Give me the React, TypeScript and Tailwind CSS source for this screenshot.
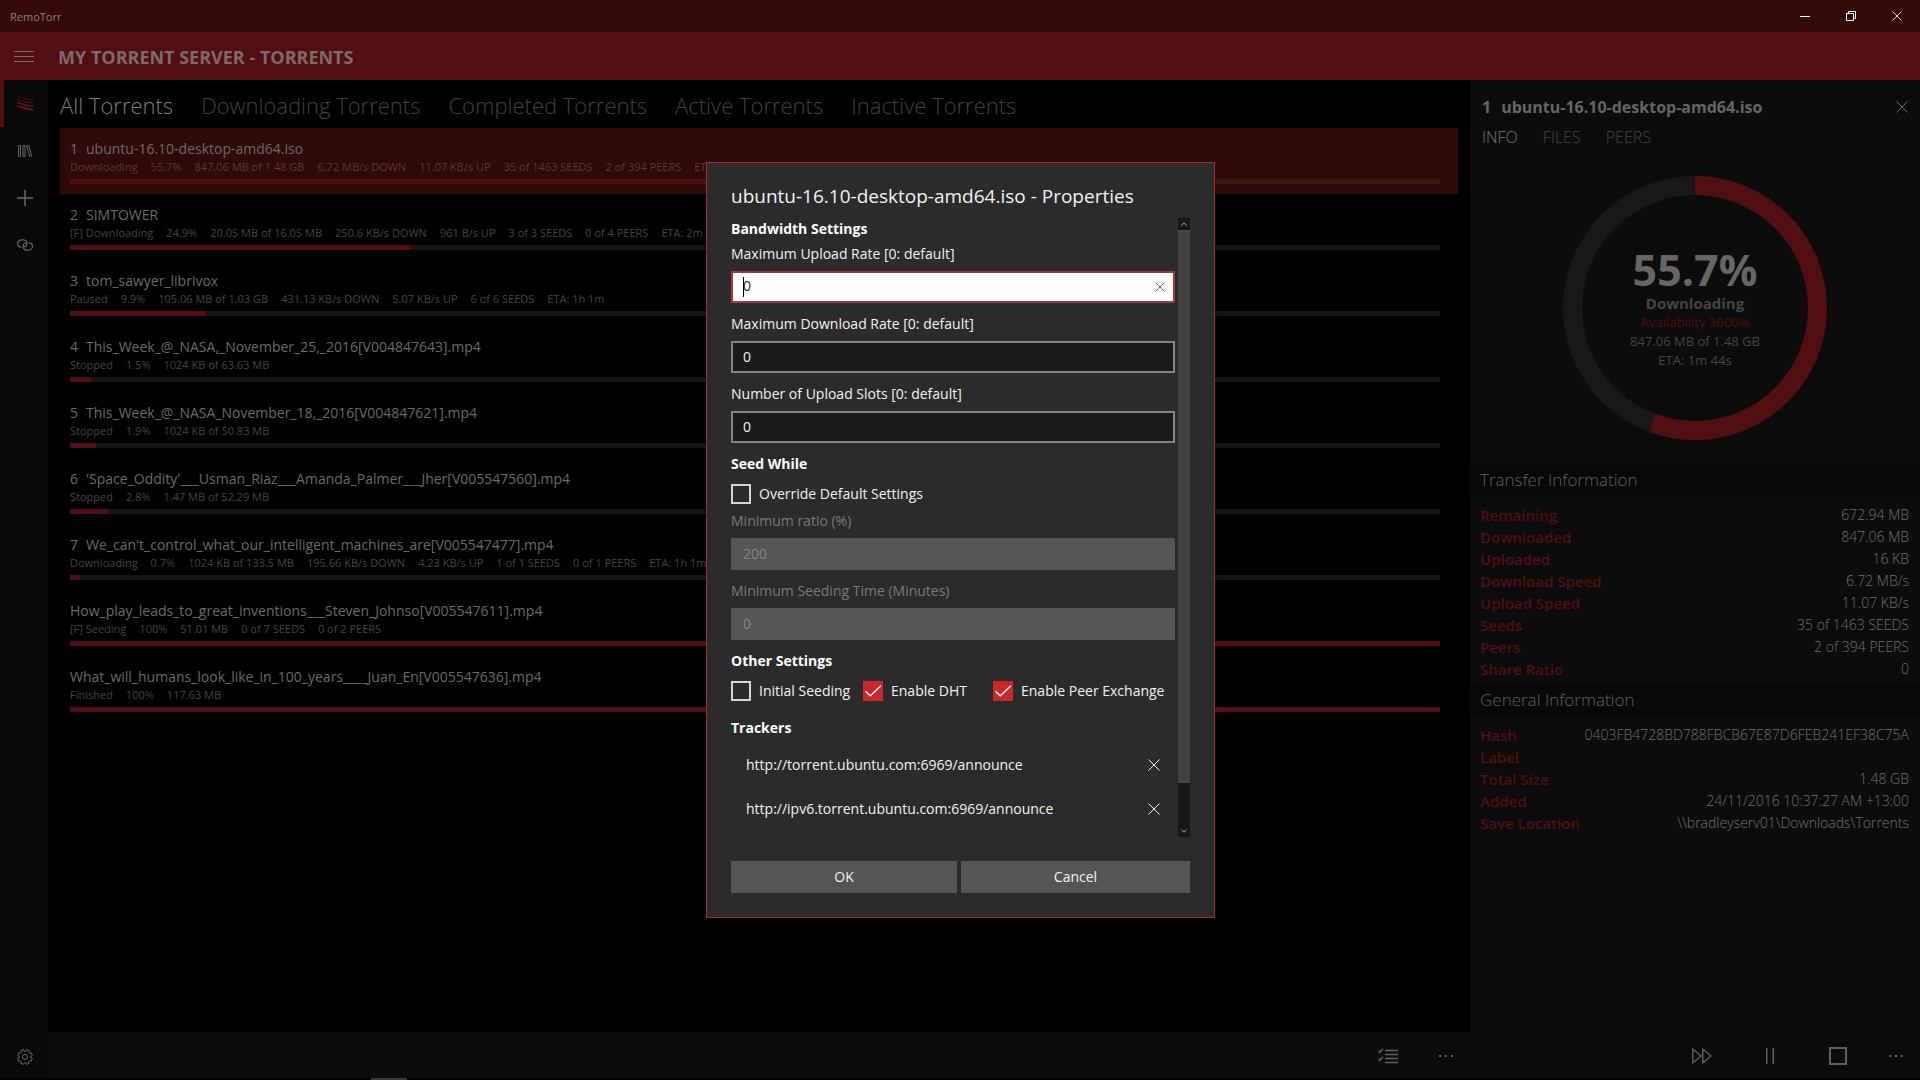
import type { ReactNode } from "react";

/* ---------- Data ---------- */
const tabs = [
  "All Torrents",
  "Downloading Torrents",
  "Completed Torrents",
  "Active Torrents",
  "Inactive Torrents",
];

const torrents = [
  {
    queue: "1",
    name: "ubuntu-16.10-desktop-amd64.iso",
    progress: 55.7,
    details: ["Downloading", "55.7%", "847.06 MB of 1.48 GB", "6.72 MB/s DOWN", "11.07 KB/s UP", "35 of 1463 SEEDS", "2 of 394 PEERS", "ETA: 1m 44s"],
  },
  {
    queue: "2",
    name: "SIMTOWER",
    progress: 24.9,
    details: ["[F] Downloading", "24.9%", "20.05 MB of 16.05 MB", "250.6 KB/s DOWN", "961 B/s UP", "3 of 3 SEEDS", "0 of 4 PEERS", "ETA: 2m"],
  },
  {
    queue: "3",
    name: "tom_sawyer_librivox",
    progress: 9.9,
    details: ["Paused", "9.9%", "105.06 MB of 1.03 GB", "431.13 KB/s DOWN", "5.07 KB/s UP", "6 of 6 SEEDS", "ETA: 1h 1m"],
  },
  {
    queue: "4",
    name: "This_Week_@_NASA,_November_25,_2016[V004847643].mp4",
    progress: 1.5,
    details: ["Stopped", "1.5%", "1024 KB of 63.63 MB"],
  },
  {
    queue: "5",
    name: "This_Week_@_NASA_November_18,_2016[V004847621].mp4",
    progress: 1.9,
    details: ["Stopped", "1.9%", "1024 KB of 50.83 MB"],
  },
  {
    queue: "6",
    name: "'Space_Oddity'___Usman_Riaz___Amanda_Palmer___Jher[V005547560].mp4",
    progress: 2.8,
    details: ["Stopped", "2.8%", "1.47 MB of 52.29 MB"],
  },
  {
    queue: "7",
    name: "We_can't_control_what_our_intelligent_machines_are[V005547477].mp4",
    progress: 0.7,
    details: ["Downloading", "0.7%", "1024 KB of 133.5 MB", "195.66 KB/s DOWN", "4.23 KB/s UP", "1 of 1 SEEDS", "0 of 1 PEERS", "ETA: 1h 1m"],
  },
  {
    queue: "",
    name: "How_play_leads_to_great_inventions___Steven_Johnso[V005547611].mp4",
    progress: 100,
    details: ["[F] Seeding", "100%", "51.01 MB", "0 of 7 SEEDS", "0 of 2 PEERS"],
  },
  {
    queue: "",
    name: "What_will_humans_look_like_in_100_years____Juan_En[V005547636].mp4",
    progress: 100,
    details: ["Finished", "100%", "117.63 MB"],
  },
];

const transferInfo = [
  ["Remaining", "672.94 MB"],
  ["Downloaded", "847.06 MB"],
  ["Uploaded", "16 KB"],
  ["Download Speed", "6.72 MB/s"],
  ["Upload Speed", "11.07 KB/s"],
  ["Seeds", "35 of 1463 SEEDS"],
  ["Peers", "2 of 394 PEERS"],
  ["Share Ratio", "0"],
];

const generalInfo = [
  ["Hash", "0403FB4728BD788FBCB67E87D6FEB241EF38C75A"],
  ["Label", ""],
  ["Total Size", "1.48 GB"],
  ["Added", "24/11/2016 10:37:27 AM +13:00"],
  ["Save Location", "\\\\bradleyserv01\\Downloads\\Torrents"],
];

const trackers = [
  "http://torrent.ubuntu.com:6969/announce",
  "http://ipv6.torrent.ubuntu.com:6969/announce",
];

/* ---------- Icons ---------- */
function CrossIcon({ className }: { className: string }) {
  return (
    <svg viewBox="0 0 12 12" className={className} fill="none" stroke="currentColor" aria-hidden="true">
      <path d="M.5.5l11 11M11.5.5l-11 11" />
    </svg>
  );
}

function MoreIcon() {
  return (
    <svg viewBox="0 0 14 2" className="h-0.5 w-3.5" fill="currentColor" aria-hidden="true">
      <path d="M0 0h2v2H0zM6 0h2v2H6zM12 0h2v2h-2z" />
    </svg>
  );
}

function StripesIcon() {
  return (
    <svg viewBox="0 0 16 15" className="h-[15px] w-4" fill="none" stroke="currentColor" aria-hidden="true">
      <path strokeWidth="0.7" d="M0 .8c4 0 8 2.800 16 2.800" />
      <path strokeWidth="1" d="M0 3.800c4 0 8 3 16 3" />
      <path strokeWidth="1.400" d="M0 6.900c4 0 8 3.200 16 3.200" />
      <path strokeWidth="1.800" d="M0 10.200c4 0 8 3.400 16 3.400" />
    </svg>
  );
}

function LibraryIcon() {
  return (
    <svg viewBox="0 0 16 14" className="h-3.5 w-4" fill="none" stroke="currentColor" aria-hidden="true">
      <path d="M1.500 1.500h2v11h-2zM6 1.500h2v11H6zM9.700 1.900l2-.5 3 10.600-2 .6z" />
    </svg>
  );
}

function LinkIcon() {
  return (
    <svg viewBox="0 0 16 12" className="h-3 w-4" fill="none" stroke="currentColor" strokeWidth="1.200" aria-hidden="true">
      <path d="M4.500 8.200C1.500 8.200.6 6 .6 4.600.6 2.600 2.500.8 5 .8h1.500c2.500 0 3.500 2.200 3.300 4.200C9.600 6.500 8.500 8 7 8" />
      <path d="M11.500 3.800c3 0 3.900 2.200 3.900 3.600 0 2-1.900 3.800-4.400 3.800H9.500C7 11.200 6 9 6.200 7 6.400 5.500 7.500 4 9 4" />
    </svg>
  );
}

const gearPoints = Array.from({ length: 8 }, (_, i) => i * 45)
  .flatMap((angle) => [
    [angle - 17, 5.7],
    [angle - 12, 7.5],
    [angle + 12, 7.5],
    [angle + 17, 5.7],
  ])
  .map(([angle, radius]) => {
    const rad = ((angle + 22.5) * Math.PI) / 180;
    return `${(8 + radius * Math.cos(rad)).toFixed(2)},${(8 + radius * Math.sin(rad)).toFixed(2)}`;
  })
  .join(" ");

function GearIcon() {
  return (
    <svg viewBox="0 0 16 16" className="size-4" fill="none" stroke="currentColor" strokeLinejoin="round" aria-hidden="true">
      <polygon points={gearPoints} />
      <circle cx="8" cy="8" r="2.600" />
    </svg>
  );
}

/* ---------- Small parts ---------- */
function NavButton({ label, active, children }: { label: string; active?: boolean; children: ReactNode }) {
  return (
    <button
      aria-label={label}
      className={
        active
          ? "flex h-[47px] w-12 items-center justify-center border-l-4 border-[#510f11] pr-0.5 text-[#6b1416]"
          : "flex h-[47px] w-12 items-center justify-center pl-0.5 text-[#666]"
      }
    >
      {children}
    </button>
  );
}

function Field({ id, label, value, disabled }: { id: string; label: string; value: string; disabled?: boolean }) {
  return (
    <div className="mb-[11px]">
      <label htmlFor={id} className={disabled ? "block text-[#7a7a7a]" : "block text-[#f2f2f2]"}>
        {label}
      </label>
      <input
        id={id}
        type="text"
        defaultValue={value}
        disabled={disabled}
        className={
          disabled
            ? "mt-[7px] block h-8 w-full border-2 border-[#555] bg-[#555] px-2.5 pb-0.5 text-[#868686]"
            : "mt-[7px] block h-8 w-full border-2 border-[#868686] bg-[#1a1a1a] px-2.5 pb-0.5 text-[#f2f2f2] outline-none"
        }
      />
    </div>
  );
}

function CheckBox({ id, label, checked }: { id: string; label: string; checked?: boolean }) {
  return (
    <div className="flex h-5 items-center">
      <span className="relative flex size-5">
        <input
          id={id}
          type="checkbox"
          defaultChecked={checked}
          className="peer size-5 appearance-none border-2 border-[#d5d5d5] checked:border-[#c9282b] checked:bg-[#c9282b]"
        />
        <svg
          viewBox="0 0 20 20"
          className="pointer-events-none absolute inset-0 hidden size-5 peer-checked:block"
          fill="none"
          stroke="#fff"
          strokeWidth="1.200"
          aria-hidden="true"
        >
          <path d="M2.500 10.200l4.800 4.600L17.800 4.800" />
        </svg>
      </span>
      <label htmlFor={id} className="pl-2 whitespace-nowrap">
        {label}
      </label>
    </div>
  );
}

function InfoSection({ title, rows }: { title: string; rows: string[][] }) {
  return (
    <section>
      <h3 className="flex h-[34px] items-center bg-[#080808] px-2.5 text-[17px] font-light text-[#606060]">{title}</h3>
      <table className="mt-[7px] mb-[3px] w-full">
        <tbody>
          {rows.map(([label, value]) => (
            <tr key={label} className="h-[22px]">
              <th scope="row" className="pl-2.5 text-left text-[15px] font-semibold text-[#510f11]">
                {label}
              </th>
              <td className="pr-[11px] text-right font-light text-[#707070]">{value}</td>
            </tr>
          ))}
        </tbody>
      </table>
    </section>
  );
}

/* ---------- Torrent list ---------- */
function TorrentList() {
  return (
    <main className="flex min-w-0 flex-1 flex-col pr-3 pl-3">
      <nav className="flex h-12 items-center gap-7 pt-0.5 text-[22px] font-light whitespace-nowrap">
        {tabs.map((tab, i) => (
          <button key={tab} className={i === 0 ? "text-[#7d7d7d]" : "text-[#404040]"}>
            {tab}
          </button>
        ))}
      </nav>
      <ul>
        {torrents.map((torrent, i) => (
          <li
            key={torrent.name}
            className={
              i === 0
                ? "bg-[#300909] pt-[11px] pr-[18px] pb-2.5 pl-2.5 text-[#553a3a]"
                : "pt-[11px] pr-[18px] pb-2.5 pl-2.5 text-[#444]"
            }
          >
            <div className="flex gap-2 text-sm leading-5 text-[#6a6a6a]">
              {torrent.queue && <span>{torrent.queue}</span>}
              <span>{torrent.name}</span>
            </div>
            <div className="flex gap-[13px] text-[11px] leading-4 whitespace-nowrap">
              {torrent.details.map((detail) => (
                <span key={detail}>{detail}</span>
              ))}
            </div>
            <div className={i === 0 ? "mt-1 h-[5px] bg-[#3a1517]" : "mt-1 h-[5px] bg-[#151515]"}>
              <div className="h-full bg-[#510f11]" style={{ width: `${torrent.progress}%` }} />
            </div>
          </li>
        ))}
      </ul>
    </main>
  );
}

/* ---------- Details pane ---------- */
function DetailsPane() {
  return (
    <aside className="flex w-[450px] shrink-0 flex-col bg-[#0c0c0c] text-sm leading-5">
      <div className="flex items-center justify-between pt-[15px] pr-3 pl-3 text-base leading-6 font-bold text-[#666]">
        <h2 className="flex gap-2.5">
          <span>1</span>
          <span>ubuntu-16.10-desktop-amd64.iso</span>
        </h2>
        <button aria-label="Close details">
          <CrossIcon className="size-3" />
        </button>
      </div>
      <nav className="flex gap-[25px] px-3 pt-2 text-base leading-5 font-light text-[#444]">
        <button className="text-[#777]">INFO</button>
        <button>FILES</button>
        <button>PEERS</button>
      </nav>

      {/* Progress ring */}
      <div className="mt-[29px] mb-[23px] grid place-items-center">
        <svg viewBox="0 0 264 264" className="col-start-1 row-start-1 size-66" fill="none" strokeWidth="19" aria-hidden="true">
          <circle cx="132" cy="132" r="122.500" stroke="#181818" />
          <circle cx="132" cy="132" r="122.500" stroke="#510f11" pathLength="100" strokeDasharray="55.700 100" transform="rotate(-90 132 132)" />
        </svg>
        <div className="col-start-1 row-start-1 flex flex-col items-center text-[13px] leading-[19px] text-[#444]">
          <span className="text-[43px] leading-[46px] font-bold text-[#666]">55.7%</span>
          <span className="text-[15px] leading-5 font-bold">Downloading</span>
          <span className="text-[#510f11]">Availability 3600%</span>
          <span>847.06 MB of 1.48 GB</span>
          <span>ETA: 1m 44s</span>
        </div>
      </div>

      <InfoSection title="Transfer Information" rows={transferInfo} />
      <InfoSection title="General Information" rows={generalInfo} />

      <div className="mt-auto flex h-[46px] items-center justify-end pt-0.5 text-[#606060]">
        <button aria-label="Force start" className="flex h-full w-[68px] items-center justify-center">
          <svg viewBox="0 0 20 16" className="h-4 w-5" fill="none" stroke="currentColor" strokeWidth="1.400" aria-hidden="true">
            <path d="M.8 1.200v13.600L9 8zM10.800 1.200v13.600L19 8z" />
          </svg>
        </button>
        <button aria-label="Pause" className="flex h-full w-[68px] items-center justify-center">
          <svg viewBox="0 0 8 16" className="h-4 w-2" fill="currentColor" aria-hidden="true">
            <path d="M0 0h1.500v16H0zM6.500 0H8v16H6.500z" />
          </svg>
        </button>
        <button aria-label="Stop" className="flex h-full w-[68px] items-center justify-center">
          <span className="size-[18px] border-2 border-current" />
        </button>
        <button aria-label="More actions" className="flex h-full w-12 items-center justify-center">
          <MoreIcon />
        </button>
      </div>
    </aside>
  );
}

/* ---------- Properties dialog ---------- */
function PropertiesDialog() {
  return (
    <div className="fixed inset-0 flex items-center justify-center pl-px">
      <div
        role="dialog"
        aria-labelledby="dialog-title"
        className="w-[509px] border border-[#a52c2e] bg-[#2b2b2b] px-6 pt-[19px] pb-6 text-sm leading-5 text-[#f2f2f2]"
      >
        <h1 id="dialog-title" className="text-[19px] leading-7">
          ubuntu-16.10-desktop-amd64.iso - Properties
        </h1>

        <div className="mt-2 flex h-[619px] gap-[3px]">
          <div className="flex-1 pt-px">
            <h2 className="mb-[5px] font-bold text-white">Bandwidth Settings</h2>
            <div className="mb-[11px]">
              <label htmlFor="max-upload" className="block">
                Maximum Upload Rate [0: default]
              </label>
              <div className="relative mt-[7px] flex h-8 items-center border-2 border-[#a4373a] bg-white text-[#222]">
                <input id="max-upload" type="text" defaultValue="0" className="min-w-0 flex-1 pb-0.5 pl-2.5 outline-none" />
                <span className="absolute left-2.5 h-5 w-px bg-black" />
                <button aria-label="Clear" className="px-2 text-[#444]">
                  <CrossIcon className="size-2.5" />
                </button>
              </div>
            </div>
            <Field id="max-download" label="Maximum Download Rate [0: default]" value="0" />
            <Field id="upload-slots" label="Number of Upload Slots [0: default]" value="0" />

            <h2 className="mb-2.5 font-bold text-white">Seed While</h2>
            <div className="mb-[7px]">
              <CheckBox id="override" label="Override Default Settings" />
            </div>
            <Field id="min-ratio" label="Minimum ratio (%)" value="200" disabled />
            <Field id="min-time" label="Minimum Seeding Time (Minutes)" value="0" disabled />

            <h2 className="mb-2.5 font-bold text-white">Other Settings</h2>
            <div className="grid grid-cols-[132px_130px_1fr]">
              <CheckBox id="initial-seeding" label="Initial Seeding" />
              <CheckBox id="enable-dht" label="Enable DHT" checked />
              <CheckBox id="enable-pex" label="Enable Peer Exchange" checked />
            </div>

            <h2 className="mt-[17px] mb-[5px] font-bold text-white">Trackers</h2>
            <ul>
              {trackers.map((tracker) => (
                <li key={tracker} className="flex h-11 items-center justify-between pr-[15px] pl-[15px]">
                  <span>{tracker}</span>
                  <button aria-label={`Remove ${tracker}`}>
                    <CrossIcon className="size-3" />
                  </button>
                </li>
              ))}
            </ul>
          </div>

          {/* Scrollbar */}
          <div className="flex w-3 flex-col bg-[#171717] text-[#b0b0b0]">
            <span className="flex h-3 items-center justify-center">
              <svg viewBox="0 0 6 4" className="h-1 w-1.5" fill="none" stroke="currentColor" aria-hidden="true">
                <path d="M.4 3.500L3 .8l2.600 2.700" />
              </svg>
            </span>
            <span className="h-[553px] bg-[#444]" />
            <span className="mt-auto flex h-3 items-center justify-center">
              <svg viewBox="0 0 6 4" className="h-1 w-1.5" fill="none" stroke="currentColor" aria-hidden="true">
                <path d="M.4.5L3 3.200 5.600.5" />
              </svg>
            </span>
          </div>
        </div>

        <div className="mt-6 grid grid-cols-[226px_1fr] gap-1">
          <button className="h-8 bg-[#555]">OK</button>
          <button className="h-8 bg-[#555]">Cancel</button>
        </div>
      </div>
    </div>
  );
}

/* ================================================================
   RemoTorr — main window
   ================================================================ */
export default function App() {
  return (
    <div className="flex min-h-screen flex-col bg-black font-['Open_Sans','Noto_Sans',sans-serif]">
      <header>
        <div className="flex h-8 items-center justify-between bg-[#360a0b] pl-2.5">
          <span className="pt-0.5 text-[11px] text-[#8a7c7c]">RemoTorr</span>
          <div className="flex text-white">
            <button aria-label="Minimize" className="flex h-8 w-[46px] items-center justify-center">
              <span className="h-px w-2.5 bg-white" />
            </button>
            <button aria-label="Restore" className="flex h-8 w-[46px] items-center justify-center">
              <svg viewBox="0 0 10 10" className="size-2.5" fill="none" stroke="currentColor" aria-hidden="true">
                <path d="M.5 2.500h7v7h-7zM2.500 2.500v-2h7v7h-2" />
              </svg>
            </button>
            <button aria-label="Close" className="flex h-8 w-[46px] items-center justify-center">
              <CrossIcon className="size-2.5" />
            </button>
          </div>
        </div>
        <div className="flex h-12 items-center bg-[#510f11] text-[#7d6a6a]">
          <button aria-label="Menu" className="flex h-12 w-12 flex-col items-center justify-center gap-1">
            <span className="h-px w-5 bg-current" />
            <span className="h-px w-5 bg-current" />
            <span className="h-px w-5 bg-current" />
          </button>
          <span className="pt-0.5 pl-2.5 text-lg font-bold">MY TORRENT SERVER - TORRENTS</span>
        </div>
      </header>

      <div className="flex flex-1">
        <nav className="flex w-12 shrink-0 flex-col bg-[#090909]">
          <NavButton label="Torrents" active>
            <StripesIcon />
          </NavButton>
          <NavButton label="Library">
            <LibraryIcon />
          </NavButton>
          <NavButton label="Add torrent">
            <svg viewBox="0 0 16 16" className="size-4" stroke="currentColor" strokeWidth="1.500" aria-hidden="true">
              <path d="M8 0v16M0 8h16" />
            </svg>
          </NavButton>
          <NavButton label="Servers">
            <LinkIcon />
          </NavButton>
          <div className="mt-auto flex h-[43px] items-center">
            <NavButton label="Settings">
              <GearIcon />
            </NavButton>
          </div>
        </nav>

        <div className="flex min-w-0 flex-1 flex-col">
          <TorrentList />
          <div className="mt-auto flex h-[46px] items-center justify-end bg-[#0c0c0c] pt-0.5 text-[#606060]">
            <button aria-label="Select" className="flex h-full w-[68px] items-center justify-center">
              <svg viewBox="0 0 20 16" className="h-4 w-5" fill="none" stroke="currentColor" strokeWidth="1.400" aria-hidden="true">
                <path d="M7 2.500h13M7 6.500h13M7 10.500h13M7 14.500h13M.4 2.800l1.400 1.400L5 1M.4 10.800l1.400 1.400L5 9" />
              </svg>
            </button>
            <button aria-label="More" className="flex h-full w-12 items-center justify-center">
              <MoreIcon />
            </button>
          </div>
        </div>

        <DetailsPane />
      </div>

      <div className="h-0.5 pl-[371px]">
        <div className="h-full w-9 bg-[#3a3a3a]" />
      </div>

      <PropertiesDialog />
    </div>
  );
}
